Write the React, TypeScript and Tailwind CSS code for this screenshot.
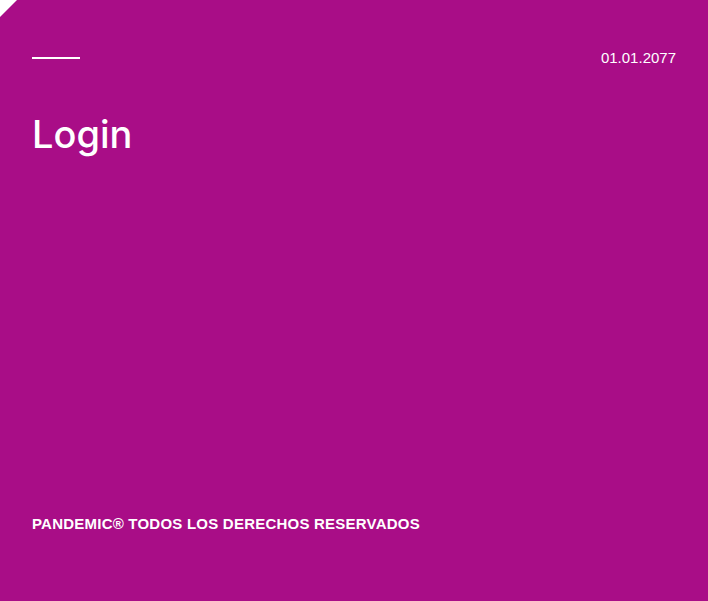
export default function App() {
  return (
    <div className="w-[708px] h-[601px] bg-white">
      <div
        className="w-full h-full bg-[#a90d87] text-white flex flex-col px-8 pt-[49px] pb-[70px] [clip-path:polygon(17px_0,100%_0,100%_100%,0_100%,0_17px)]"
        style={{ fontFamily: '"Liberation Sans", Arial, sans-serif' }}
      >
        <div className="flex items-center justify-between h-[17px]">
          <div className="w-12 h-[2px] bg-white" />
          <span className="text-[15px] leading-none">01.01.2077</span>
        </div>
        <h1
          className="mt-[49px] text-[38px] leading-none font-medium"
          style={{ fontFamily: 'Inter, "Liberation Sans", sans-serif' }}
        >
          Login
        </h1>
        <div className="flex-1" />
        <p className="text-[15px] font-bold leading-none uppercase tracking-[0.015em]">
          PANDEMIC® Todos los derechos reservados
        </p>
      </div>
    </div>
  )
}
